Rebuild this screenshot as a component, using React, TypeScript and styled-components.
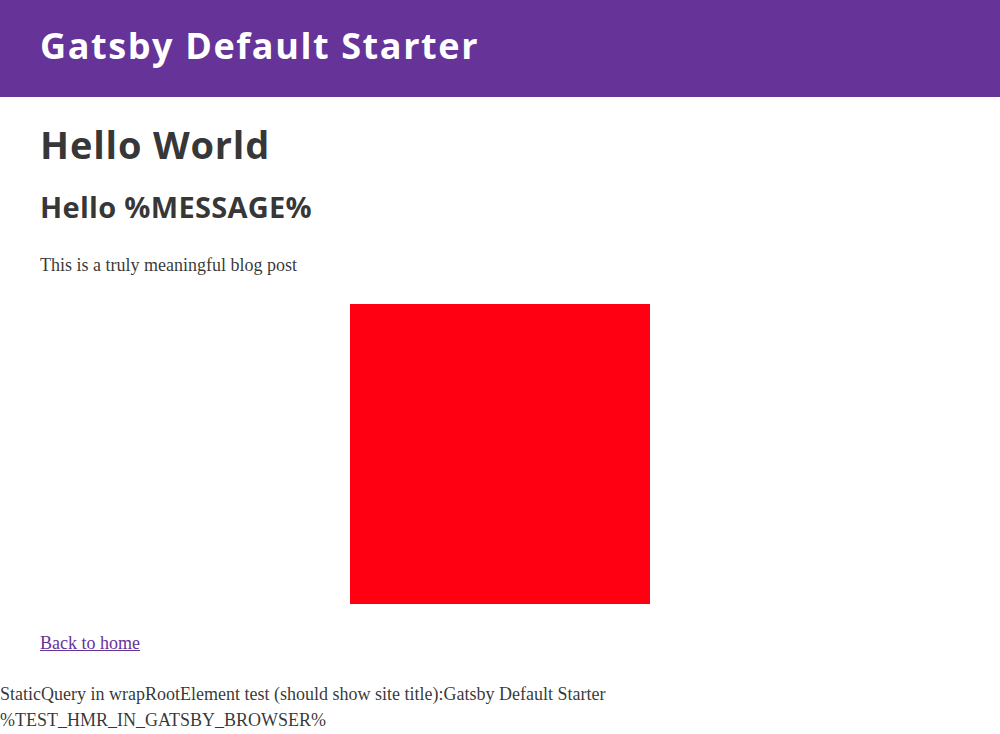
import React from "react";
import styled, { createGlobalStyle } from "styled-components";

const GlobalStyle = createGlobalStyle`
  html, body { margin: 0; padding: 0; background: #ffffff; }
  body {
    font-family: "Liberation Serif", "Times New Roman", serif;
    font-size: 18px;
    line-height: 26px;
    color: rgba(0, 0, 0, 0.8);
  }
`;

const Header = styled.header`
  background: #663399;
  padding: 24px 40px 29px;
`;

const SiteTitle = styled.h1`
  margin: 0;
  font-family: "Open Sans", "Noto Sans", sans-serif;
  font-weight: 700;
  font-size: 36px;
  line-height: 44px;
  letter-spacing: 1.6px;
  color: #ffffff;
`;

const Main = styled.main`
  padding: 24px 40px 0;
  display: flex;
  flex-direction: column;
`;

const Title = styled.h1`
  margin: 0 0 22px;
  font-family: "Open Sans", "Noto Sans", sans-serif;
  font-weight: 700;
  font-size: 38px;
  line-height: 46px;
  letter-spacing: 0.8px;
  color: rgba(0, 0, 0, 0.8);
`;

const Subtitle = styled.h2`
  margin: 0 0 27px;
  font-family: "Open Sans", "Noto Sans", sans-serif;
  font-weight: 700;
  font-size: 29px;
  line-height: 36px;
  letter-spacing: 0.3px;
  color: rgba(0, 0, 0, 0.8);
`;

const Paragraph = styled.p`
  margin: 0 0 26px;
`;

const ImageBox = styled.div`
  align-self: center;
  width: 300px;
  height: 300px;
  background: #ff0013;
  margin-bottom: 26px;
`;

const HomeLink = styled.a`
  color: #663399;
  text-decoration: underline;
  align-self: flex-start;
`;

const Footer = styled.div`
  margin-top: 25px;
`;

export default function App() {
  return (
    <>
      <GlobalStyle />
      <Header>
        <SiteTitle>Gatsby Default Starter</SiteTitle>
      </Header>
      <Main>
        <Title>Hello World</Title>
        <Subtitle>Hello %MESSAGE%</Subtitle>
        <Paragraph>This is a truly meaningful blog post</Paragraph>
        <ImageBox />
        <HomeLink href="#">Back to home</HomeLink>
      </Main>
      <Footer>
        <div>StaticQuery in wrapRootElement test (should show site title):Gatsby Default Starter</div>
        <div>%TEST_HMR_IN_GATSBY_BROWSER%</div>
      </Footer>
    </>
  );
}
